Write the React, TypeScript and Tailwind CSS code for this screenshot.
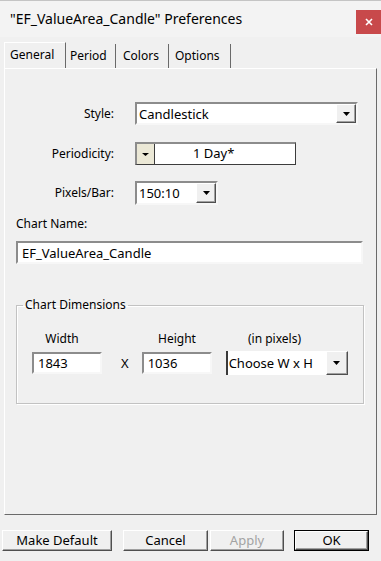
import React from 'react';

const sunken =
  'bg-white border-2 border-[#f7f7f7] border-t-[#8c8c8c] border-l-[#8c8c8c]';
const raised =
  'bg-[#f0f0f0] border border-t-white border-l-white border-r-[#4f4f4f] border-b-[#4f4f4f] shadow-[inset_-1px_-1px_0_#a0a0a0]';

function Arrow() {
  return (
    <svg width="7" height="4" viewBox="0 0 7 4">
      <path d="M0 0h7L3.5 4z" fill="#000" />
    </svg>
  );
}

function DropButton({ className }: { className: string }) {
  return (
    <div className={`flex items-center justify-center ${raised} ${className}`}>
      <Arrow />
    </div>
  );
}

const tabs = [
  { label: 'General', w: 'w-[62px]', pad: 'pl-[5px]', active: true },
  { label: 'Period', w: 'w-[50px]', pad: 'pl-[4px]', active: false },
  { label: 'Colors', w: 'w-[53px]', pad: 'pl-[7px]', active: false },
  { label: 'Options', w: 'w-[62px]', pad: 'pl-[6px]', active: false },
];

function Button({ label, className, disabled, isDefault }: { label: string; className: string; disabled?: boolean; isDefault?: boolean }) {
  return (
    <div className={`h-[21px] ${className} ${isDefault ? 'border border-black' : ''}`}>
      <div
        className={`h-full flex items-center justify-center text-[13px] leading-none ${raised} ${
          disabled ? 'text-[#a3a3a3]' : 'text-black'
        }`}
      >
        {label}
      </div>
    </div>
  );
}

export default function App() {
  return (
    <div className="w-[381px] h-[561px] bg-[#f0f0f0] flex flex-col font-['Noto_Sans','Segoe_UI',sans-serif] text-black overflow-hidden">
      {/* title bar */}
      <div className="h-[37px] shrink-0 flex items-start justify-between border-t border-[#c4c4c4] bg-[#f3f3f3]">
        <span className="mt-[9px] ml-[10px] text-[14px] leading-[18px]">"EF_ValueArea_Candle" Preferences</span>
        <div className="mt-[9px] w-[25px] h-[24px] bg-[#c8494b] flex items-center justify-center">
          <svg width="8" height="8" viewBox="0 0 8 8">
            <path d="M1 1l6 6M7 1L1 7" stroke="#fff" strokeWidth="1.6" />
          </svg>
        </div>
      </div>

      {/* tabs */}
      <div className="h-[31px] shrink-0 flex items-end pl-[4px]">
        {tabs.map((t) => (
          <div
            key={t.label}
            className={`${t.w} ${t.pad} ${
              t.active ? 'h-[26px] pt-[4px] border-l border-t border-white' : 'h-[24px] pt-[4px]'
            } border-r border-r-[#6a6a6a] text-[12px] leading-[16px]`}
          >
            {t.label}
          </div>
        ))}
      </div>

      {/* tab panel */}
      <div className="mx-[4px] h-[447px] shrink-0 border border-t-white border-l-white border-r-[#6a6a6a] border-b-[#6a6a6a] flex flex-col text-[12px] leading-[16px]">
        <div className="mt-[33px] flex items-center">
          <span className="w-[109px] text-right">Style:</span>
          <div className={`ml-[21px] w-[223px] h-[23px] flex items-center justify-between ${sunken}`}>
            <span className="pl-[2px] text-[13px]">Candlestick</span>
            <DropButton className="w-[20px] h-[19px]" />
          </div>
        </div>

        <div className="mt-[17px] flex items-center">
          <span className="w-[109px] text-right">Periodicity:</span>
          <div className="ml-[21px] w-[161px] h-[23px] flex border border-[#3c3c3c] border-l-2 border-t-2 border-l-[#8c8c8c] border-t-[#8c8c8c] bg-white">
            <div className="w-[18px] bg-[#ebe8d6] border-r border-[#3c3c3c] flex items-center justify-center">
              <svg width="7" height="3" viewBox="0 0 7 3">
                <path d="M0 0h7L3.5 3z" fill="#000" />
              </svg>
            </div>
            <span className="pl-[38px] text-[13px] leading-[19px]">1 Day*</span>
          </div>
        </div>

        <div className="mt-[16px] flex items-center">
          <span className="w-[109px] text-right">Pixels/Bar:</span>
          <div className={`ml-[21px] w-[83px] h-[24px] flex items-center justify-between ${sunken}`}>
            <span className="pl-[2px] text-[13px]">150:10</span>
            <DropButton className="w-[20px] h-[20px]" />
          </div>
        </div>

        <span className="mt-[11px] ml-[11px]">Chart Name:</span>
        <div className={`mt-[9px] ml-[11px] w-[347px] h-[23px] flex items-center ${sunken}`}>
          <span className="pl-[4px] text-[13px]">EF_ValueArea_Candle</span>
        </div>

        <fieldset className="mt-[33px] ml-[11px] w-[348px] border border-[#c2c2c2] shadow-[inset_1px_1px_0_#fff,1px_1px_0_#fff] pb-[28px]">
          <legend className="ml-[6px] px-[2px]">Chart Dimensions</legend>
          <div className="mt-[18px] flex">
            <span className="w-[90px] flex justify-center">Width</span>
            <span className="w-[140px] flex justify-center">Height</span>
            <span className="w-[55px] flex justify-center whitespace-nowrap">(in pixels)</span>
          </div>
          <div className="mt-[4px] h-[24px] flex items-center">
            <div className={`ml-[15px] w-[70px] h-[22px] flex items-center ${sunken}`}>
              <span className="pl-[4px] text-[13px]">1843</span>
            </div>
            <span className="ml-[19px] text-[13px]">X</span>
            <div className={`ml-[13px] w-[70px] h-[22px] flex items-center ${sunken}`}>
              <span className="pl-[4px] text-[13px]">1036</span>
            </div>
            <div className="ml-[14px] w-[122px] h-[24px] flex items-center justify-between bg-white border-l-2 border-l-[#3a3a3a]">
              <span className="pl-[1px] text-[13px]">Choose W x H</span>
              <DropButton className="w-[22px] h-[24px]" />
            </div>
          </div>
        </fieldset>
      </div>

      {/* buttons */}
      <div className="mt-[15px] flex items-center">
        <Button label="Make Default" className="ml-[2px] w-[110px]" />
        <Button label="Cancel" className="ml-[11px] w-[85px]" />
        <Button label="Apply" className="ml-[2px] w-[74px]" disabled />
        <Button label="OK" className="ml-[10px] w-[75px]" isDefault />
      </div>
    </div>
  );
}
